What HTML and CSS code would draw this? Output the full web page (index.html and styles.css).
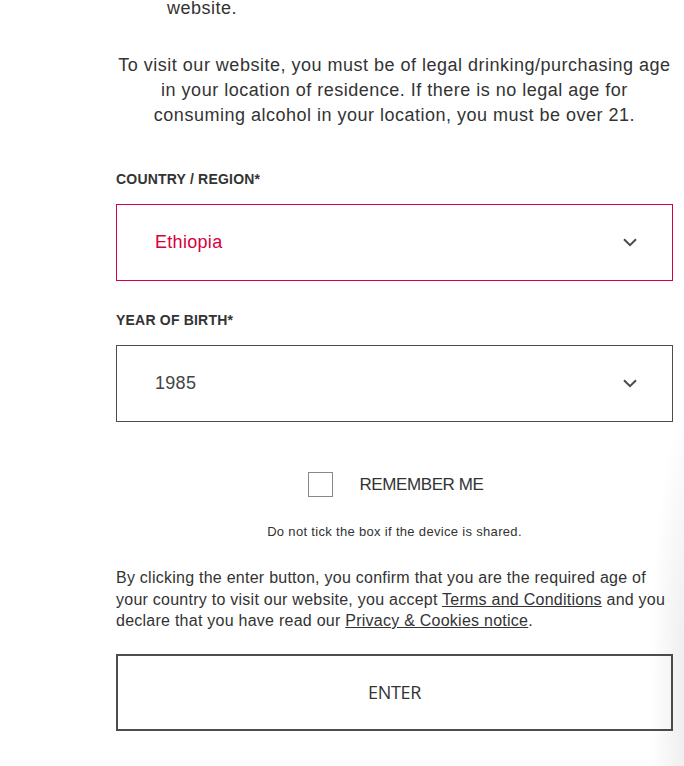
FILE: index.html
```html
<!DOCTYPE html>
<html lang="en">
<head>
<meta charset="utf-8">
<title>Age gate</title>
<link rel="stylesheet" href="styles.css">
</head>
<body>
<div class="page">
  <div class="gate">
    <p class="intro-tail">website.</p>
    <p class="intro">To visit our website, you must be of legal drinking/purchasing age in your location of residence. If there is no legal age for consuming alcohol in your location, you must be over 21.</p>

    <div class="field">
      <label class="label">COUNTRY / REGION*</label>
      <div class="select select-active">
        <span class="value value-active">Ethiopia</span>
        <svg class="chev" width="14" height="9" viewBox="0 0 14 9"><path d="M1 1.2 L7 7.2 L13 1.2" fill="none" stroke="#4a4a4a" stroke-width="2"/></svg>
      </div>
    </div>

    <div class="field">
      <label class="label">YEAR OF BIRTH*</label>
      <div class="select">
        <span class="value">1985</span>
        <svg class="chev" width="14" height="9" viewBox="0 0 14 9"><path d="M1 1.2 L7 7.2 L13 1.2" fill="none" stroke="#4a4a4a" stroke-width="2"/></svg>
      </div>
    </div>

    <div class="remember">
      <span class="box"></span>
      <span class="remember-text">REMEMBER ME</span>
    </div>
    <p class="note">Do not tick the box if the device is shared.</p>

    <p class="legal">By clicking the enter button, you confirm that you are the required age of your country to visit our website, you accept <a href="#">Terms and Conditions</a> and you declare that you have read our <a href="#">Privacy &amp; Cookies notice</a>.</p>

    <button class="enter">ENTER</button>
  </div>
  <div class="edge-shadow"></div>
</div>
</body>
</html>
```
FILE: styles.css
```css
html, body {
  margin: 0;
  padding: 0;
  background: #fff;
}
body {
  font-family: "Liberation Sans", Arial, sans-serif;
  color: #333;
  overflow: hidden;
}
.page {
  position: relative;
  width: 684px;
  height: 766px;
  overflow: hidden;
}
.gate {
  width: 557px;
  margin-left: 116px;
}
.intro-tail {
  margin: -4px 0 0 51px;
  font-size: 18px;
  line-height: 25px;
  letter-spacing: 0.5px;
  color: #333;
}
.intro {
  margin: 32px 0 0 0;
  text-align: center;
  font-size: 18px;
  line-height: 25px;
  letter-spacing: 0.5px;
  color: #333;
}
.label {
  display: block;
  font-weight: bold;
  font-size: 14px;
  line-height: 16px;
  letter-spacing: 0.2px;
  color: #333;
  margin-top: 43px;
  margin-bottom: 17px;
}
.field + .field .label {
  margin-top: 31px;
}
.select {
  box-sizing: border-box;
  height: 77px;
  border: 1px solid #4d4d4d;
  display: flex;
  align-items: center;
  justify-content: space-between;
  padding: 0 35px 0 38px;
}
.select-active {
  border-color: #d6003c;
}
.value {
  font-size: 18px;
  letter-spacing: 0.3px;
  color: #444;
}
.value-active {
  color: #d6003c;
}
.chev {
  display: block;
}
.remember {
  display: flex;
  align-items: center;
  justify-content: center;
  gap: 26px;
  margin-top: 50px;
  padding-left: 3px;
}
.box {
  box-sizing: border-box;
  width: 25px;
  height: 25px;
  border: 1px solid #888;
  display: block;
}
.remember-text {
  font-size: 17px;
  letter-spacing: -0.4px;
  color: #333;
}
.note {
  text-align: center;
  font-size: 13px;
  line-height: 16px;
  letter-spacing: 0.32px;
  margin: 27px 0 0 0;
  color: #333;
}
.legal {
  font-size: 16px;
  line-height: 21.5px;
  letter-spacing: 0.25px;
  margin: 27px 0 0 0;
  color: #333;
}
.legal a {
  color: #333;
  text-decoration: underline;
}
.enter {
  display: block;
  box-sizing: border-box;
  width: 557px;
  height: 77px;
  margin-top: 22px;
  background: transparent;
  border: 2px solid #4d4d4d;
  font-family: "Open Sans", sans-serif;
  font-size: 18px;
  letter-spacing: -0.3px;
  color: #333;
  cursor: pointer;
}
.edge-shadow {
  position: absolute;
  right: -60px;
  top: 380px;
  width: 95px;
  height: 640px;
  border-radius: 50%;
  background: radial-gradient(ellipse at center, rgba(0,0,0,0.09), rgba(0,0,0,0) 70%);
  pointer-events: none;
}
```
